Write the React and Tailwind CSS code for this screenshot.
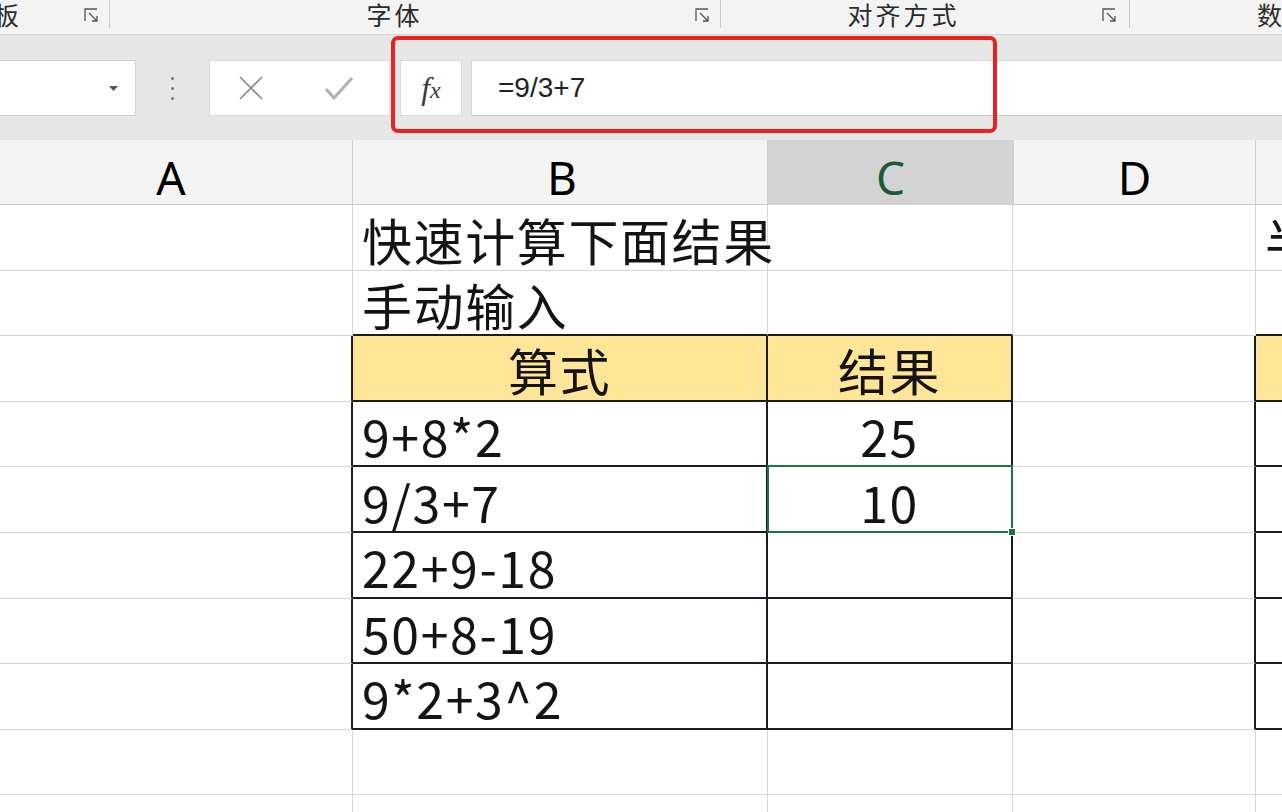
import React from 'react';

const cjk = "font-['Noto_Sans_CJK_SC',sans-serif]";

// Dialog launcher icon used at the end of ribbon groups
function Launcher() {
  return (
    <svg width="15" height="15" viewBox="0 0 15 15" className="mt-[8px]">
      <path d="M1 13V1h12" fill="none" stroke="#555" strokeWidth="1.3" />
      <path d="M5 5l8 8M8 13h5V8" fill="none" stroke="#555" strokeWidth="1.3" />
    </svg>
  );
}

function Ribbon() {
  return (
    <div className={`h-[35px] flex bg-[#f3f3f3] border-b border-[#d6d6d6] ${cjk} text-[25px] tracking-[3px] text-[#2b2b2b]`}>
      <div className="w-[110px] flex items-start">
        <span className="-mt-[4px] flex-1 -ml-[6px]">板</span>
        <Launcher />
        <div className="w-[10px]" />
        <div className="w-px h-[28px] bg-[#c9c9c9]" />
      </div>
      <div className="w-[611px] flex items-start">
        <span className="-mt-[4px] flex-1 text-center pr-[16px]">字体</span>
        <Launcher />
        <div className="w-[10px]" />
        <div className="w-px h-[28px] bg-[#c9c9c9]" />
      </div>
      <div className="w-[409px] flex items-start">
        <span className="-mt-[4px] flex-1 text-center pr-[16px]">对齐方式</span>
        <Launcher />
        <div className="w-[12px]" />
        <div className="w-px h-[28px] bg-[#c9c9c9]" />
      </div>
      <div className="flex-1 flex items-start overflow-hidden">
        <span className="-mt-[4px] ml-[127px] whitespace-nowrap">数字</span>
      </div>
    </div>
  );
}

function FormulaBar() {
  return (
    <div className="h-[105px] bg-[#e7e7e7] pt-[25px] flex items-start">
      <div className="w-[136px] h-[56px] bg-white border border-l-0 border-[#d0d0d0] flex items-center justify-end pr-[17px]">
        <svg width="9" height="5" viewBox="0 0 9 5">
          <path d="M0 0h9L4.5 5z" fill="#555" />
        </svg>
      </div>
      <div className="w-[73px] h-[56px] flex flex-col items-center justify-center gap-[7px]">
        <div className="w-[3px] h-[3px] rounded-full bg-[#777]" />
        <div className="w-[3px] h-[3px] rounded-full bg-[#777]" />
        <div className="w-[3px] h-[3px] rounded-full bg-[#777]" />
      </div>
      <div className="w-[181px] h-[56px] bg-white border border-[#d9d9d9] flex items-center">
        <svg width="26" height="26" viewBox="0 0 26 26" className="ml-[28px]">
          <path d="M2 2l22 22M24 2L2 24" stroke="#8a8a8a" strokeWidth="1.6" fill="none" />
        </svg>
        <svg width="30" height="26" viewBox="0 0 30 26" className="ml-[60px]">
          <path d="M2 14l8 9L28 3" stroke="#b3b3b3" strokeWidth="3" fill="none" />
        </svg>
      </div>
      <div className="w-[10px]" />
      <div className="w-[62px] h-[56px] bg-white border border-[#d9d9d9] flex items-center justify-center font-['Liberation_Serif',serif] italic text-[32px] text-[#3a3a3a]">
        <span>f</span><span className="text-[24px] mt-[4px]">x</span>
      </div>
      <div className="w-[9px]" />
      <div className="flex-1 h-[56px] bg-white border border-r-0 border-[#d9d9d9] border-b-[#b9cbbf] flex items-center pl-[26px] font-['Liberation_Sans',sans-serif] text-[28px] text-[#222]">
        =9/3+7
      </div>
    </div>
  );
}

function ColumnHeaders() {
  return (
    <div className="h-[65px] grid grid-cols-[353px_415px_245px_243px_1fr] bg-[#f4f4f4] border-b border-[#c8c8c8] font-['Noto_Sans',sans-serif] text-[46px]">
      <div className="border-r border-[#cfcfcf] flex items-center justify-center pr-[10px] text-black">A</div>
      <div className="border-r border-[#cfcfcf] flex items-center justify-center pl-[4px] text-black">B</div>
      <div className="bg-[#d3d3d3] border-b-[3px] border-[#217346] flex items-center justify-center text-[#1d5a3a] pt-[3px]">C</div>
      <div className="border-l border-r border-[#cfcfcf] flex items-center justify-center text-black">D</div>
      <div />
    </div>
  );
}

// each cell: [text, center, yellow, rightBlack, bottomBlack]
const rows = [
  [['', 0, 0, 0, 0], ['快速计算下面结果', 0, 0, 0, 0], ['', 0, 0, 0, 0], ['', 0, 0, 0, 0], ['半自动输入', 0, 0, 0, 0]],
  [['', 0, 0, 0, 0], ['手动输入', 0, 0, 0, 1], ['', 0, 0, 0, 1], ['', 0, 0, 0, 0], ['', 0, 0, 0, 1]],
  [['', 0, 0, 1, 0], ['算式', 1, 1, 1, 1], ['结果', 1, 1, 1, 1], ['', 0, 0, 1, 0], ['', 0, 1, 0, 1]],
  [['', 0, 0, 1, 0], ['9+8*2', 0, 0, 1, 1], ['25', 1, 0, 1, 1], ['', 0, 0, 1, 0], ['', 0, 0, 0, 1]],
  [['', 0, 0, 1, 0], ['9/3+7', 0, 0, 1, 1], ['10', 1, 0, 1, 1], ['', 0, 0, 1, 0], ['', 0, 0, 0, 1]],
  [['', 0, 0, 1, 0], ['22+9-18', 0, 0, 1, 1], ['', 1, 0, 1, 1], ['', 0, 0, 1, 0], ['', 0, 0, 0, 1]],
  [['', 0, 0, 1, 0], ['50+8-19', 0, 0, 1, 1], ['', 1, 0, 1, 1], ['', 0, 0, 1, 0], ['', 0, 0, 0, 1]],
  [['', 0, 0, 1, 0], ['9*2+3^2', 0, 0, 1, 1], ['', 1, 0, 1, 1], ['', 0, 0, 1, 0], ['', 0, 0, 0, 1]],
  [['', 0, 0, 0, 0], ['', 0, 0, 0, 0], ['', 0, 0, 0, 0], ['', 0, 0, 0, 0], ['', 0, 0, 0, 0]],
  [['', 0, 0, 0, 0], ['', 0, 0, 0, 0], ['', 0, 0, 0, 0], ['', 0, 0, 0, 0], ['', 0, 0, 0, 0]],
];

function Cell({ cell, selected }) {
  const [text, center, yellow, rightBlack, bottomBlack] = cell;
  return (
    <div
      className={[
        'relative h-[65.6px] flex items-center whitespace-nowrap pt-[4px]',
        center ? 'justify-center' : 'justify-start pl-[9px]',
        yellow ? 'bg-[#fee597]' : 'bg-white',
        rightBlack ? 'border-r-2 border-r-[#1c1c24]' : 'border-r border-r-[#d7d7d7]',
        bottomBlack ? 'border-b-2 border-b-[#1c1c24]' : 'border-b border-b-[#d7d7d7]',
      ].join(' ')}
    >
      <span className="relative z-10">{text}</span>
      {selected && (
        <div className="absolute -left-px -top-[2px] -right-[2px] -bottom-[2px] border-2 border-[#217346] z-20">
          <div className="absolute -right-[5px] -bottom-[5px] w-[8px] h-[8px] bg-[#217346] border border-white" />
        </div>
      )}
    </div>
  );
}

function Sheet() {
  return (
    <div className={`grid grid-cols-[353px_415px_245px_243px_1fr] ${cjk} text-[50px] tracking-[1.6px] text-[#141414]`}>
      {rows.map((row, r) =>
        row.map((cell, c) => (
          <Cell key={`${r}-${c}`} cell={cell} selected={r === 4 && c === 2} />
        ))
      )}
    </div>
  );
}

export default function App() {
  return (
    <div className="w-[1282px] h-[812px] overflow-hidden bg-white relative">
      <Ribbon />
      <FormulaBar />
      <ColumnHeaders />
      <Sheet />
      {/* red annotation box round the formula bar */}
      <div className="absolute left-[391px] top-[36px] w-[606px] h-[97px] border-[4px] border-[#e8221f] rounded-[7px]" />
    </div>
  );
}
